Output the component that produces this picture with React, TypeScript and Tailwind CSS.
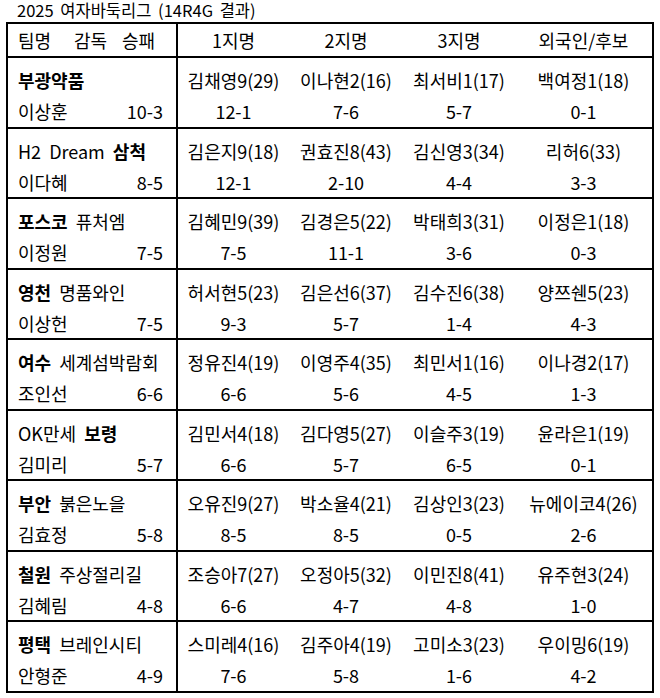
import React from "react";

type Pick = { name: string; rec: string };
type Team = { pre?: string; bold: string; post?: string; coach: string; rec: string; picks: Pick[] };

const teams: Team[] = [
  { bold: "부광약품", coach: "이상훈", rec: "10-3", picks: [
    { name: "김채영9(29)", rec: "12-1" }, { name: "이나현2(16)", rec: "7-6" },
    { name: "최서비1(17)", rec: "5-7" }, { name: "백여정1(18)", rec: "0-1" } ] },
  { pre: "H2 Dream ", bold: "삼척", coach: "이다혜", rec: "8-5", picks: [
    { name: "김은지9(18)", rec: "12-1" }, { name: "권효진8(43)", rec: "2-10" },
    { name: "김신영3(34)", rec: "4-4" }, { name: "리허6(33)", rec: "3-3" } ] },
  { bold: "포스코", post: " 퓨처엠", coach: "이정원", rec: "7-5", picks: [
    { name: "김혜민9(39)", rec: "7-5" }, { name: "김경은5(22)", rec: "11-1" },
    { name: "박태희3(31)", rec: "3-6" }, { name: "이정은1(18)", rec: "0-3" } ] },
  { bold: "영천", post: " 명품와인", coach: "이상헌", rec: "7-5", picks: [
    { name: "허서현5(23)", rec: "9-3" }, { name: "김은선6(37)", rec: "5-7" },
    { name: "김수진6(38)", rec: "1-4" }, { name: "양쯔쉔5(23)", rec: "4-3" } ] },
  { bold: "여수", post: " 세계섬박람회", coach: "조인선", rec: "6-6", picks: [
    { name: "정유진4(19)", rec: "6-6" }, { name: "이영주4(35)", rec: "5-6" },
    { name: "최민서1(16)", rec: "4-5" }, { name: "이나경2(17)", rec: "1-3" } ] },
  { pre: "OK만세 ", bold: "보령", coach: "김미리", rec: "5-7", picks: [
    { name: "김민서4(18)", rec: "6-6" }, { name: "김다영5(27)", rec: "5-7" },
    { name: "이슬주3(19)", rec: "6-5" }, { name: "윤라은1(19)", rec: "0-1" } ] },
  { bold: "부안", post: " 붉은노을", coach: "김효정", rec: "5-8", picks: [
    { name: "오유진9(27)", rec: "8-5" }, { name: "박소율4(21)", rec: "8-5" },
    { name: "김상인3(23)", rec: "0-5" }, { name: "뉴에이코4(26)", rec: "2-6" } ] },
  { bold: "철원", post: " 주상절리길", coach: "김혜림", rec: "4-8", picks: [
    { name: "조승아7(27)", rec: "6-6" }, { name: "오정아5(32)", rec: "4-7" },
    { name: "이민진8(41)", rec: "4-8" }, { name: "유주현3(24)", rec: "1-0" } ] },
  { bold: "평택", post: " 브레인시티", coach: "안형준", rec: "4-9", picks: [
    { name: "스미레4(16)", rec: "7-6" }, { name: "김주아4(19)", rec: "5-8" },
    { name: "고미소3(23)", rec: "1-6" }, { name: "우이밍6(19)", rec: "4-2" } ] },
];

// column widths for the four pick columns
const colW = ["w-[111px]", "w-[114px]", "w-[112px]", "w-[137px]"];

export default function App() {
  return (
    <div
      className="w-[660px] h-[698px] bg-white text-black overflow-hidden"
      style={{ fontFamily: '"Noto Sans CJK KR", "Noto Sans", sans-serif' }}
    >
      {/* Title */}
      <div className="h-[22px] pl-[17px] pt-[1px] text-[16.5px] leading-[19px] [word-spacing:3px] whitespace-nowrap">
        2025 여자바둑리그 (14R4G 결과)
      </div>

      {/* Table */}
      <div className="ml-[6px] w-[648px] border-2 border-black text-[18px] leading-[24px]">
        {/* Header */}
        <div className="flex h-[32px]">
          <div className="w-[170px] border-r-2 border-black flex items-center pl-[10px]">
            <span className="w-[56px]">팀명</span>
            <span className="w-[48px]">감독</span>
            <span>승패</span>
          </div>
          {["1지명", "2지명", "3지명", "외국인/후보"].map((h, i) => (
            <div key={h} className={`${colW[i]} flex items-center justify-center`}>
              {h}
            </div>
          ))}
        </div>

        {/* Rows */}
        {teams.map((t) => (
          <div key={t.coach} className="flex h-[70.5px] border-t-2 border-black">
            <div className="w-[170px] border-r-2 border-black pl-[10px] pr-[13px] pt-[10px] flex flex-col gap-[7px]">
              <div className="whitespace-pre [word-spacing:4px]">
                {t.pre}
                <span className="font-bold">{t.bold}</span>
                {t.post}
              </div>
              <div className="flex justify-between">
                <span>{t.coach}</span>
                <span>{t.rec}</span>
              </div>
            </div>
            {t.picks.map((p, i) => (
              <div
                key={i}
                className={`${colW[i]} pt-[10px] flex flex-col items-center gap-[7px] whitespace-nowrap`}
              >
                <div>{p.name}</div>
                <div>{p.rec}</div>
              </div>
            ))}
          </div>
        ))}
      </div>
    </div>
  );
}
